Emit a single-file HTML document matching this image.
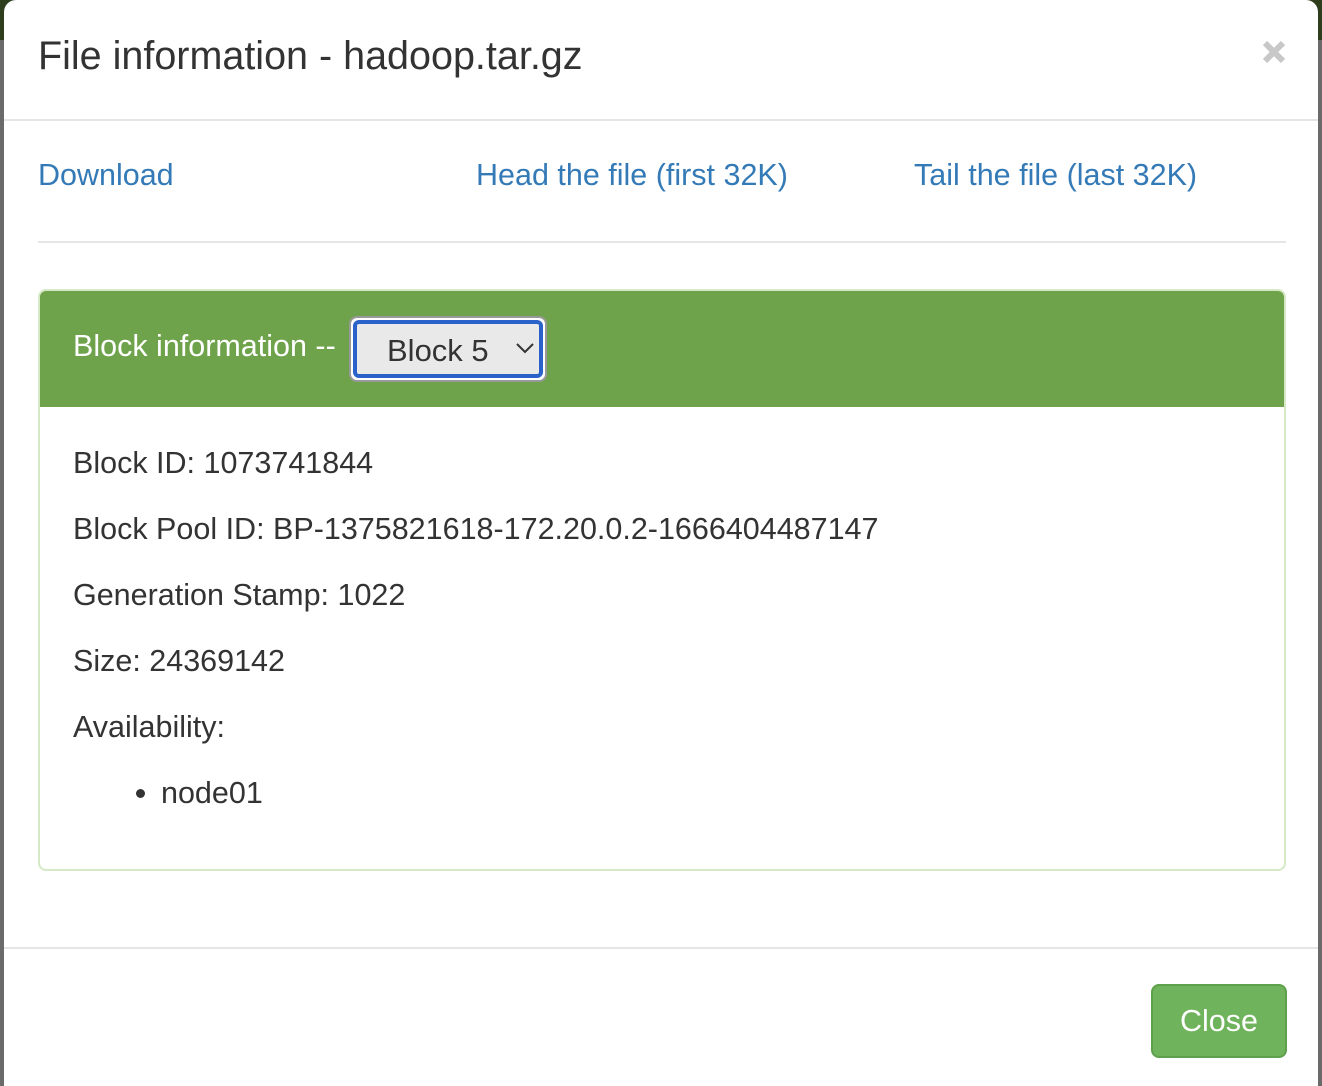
<!DOCTYPE html>
<html><head><style>
*{box-sizing:border-box;margin:0;padding:0}
body{width:1322px;height:1086px;overflow:hidden;background:#6a6a6a;font-family:"Liberation Sans",Arial,sans-serif;position:relative}
.topbar{position:absolute;left:0;top:0;width:1322px;height:40px;background:#2e3d1c}
.modal{position:absolute;left:4px;top:0;width:1314px;height:1086px;background:#fff;border-radius:12px 12px 0 0}
.title{position:absolute;left:34px;top:34px;font-size:39.5px;color:#333}
.x{position:absolute;left:1258px;top:40px}
.hr{position:absolute;left:0;width:1314px;height:2px;background:#e5e5e5}
.link{position:absolute;top:158px;font-size:30.5px;color:#337ab7}
.panel{position:absolute;left:34px;top:289px;width:1248px;height:582px;border:2px solid #d6e9c6;border-radius:8px;overflow:hidden}
.ph{height:116px;background:#6fa34b;position:relative}
.ph span{position:absolute;left:33px;top:38px;color:#fff;font-size:30.5px}
.sel{position:absolute;left:309px;top:25px;width:198px;height:66px;border:2px solid #999;border-radius:8px;background:#fff;padding:2px}
.sel div{width:100%;height:100%;border:4px solid #2a62c9;border-radius:6px;background:#e9e9e9;font-size:31px;color:#333;padding:9px 0 0 30px;position:relative}
.sel svg{position:absolute;right:4px;top:18px}
.pb{padding:39px 33px;font-size:30.5px;color:#333}
.pb p{height:66px}
.close{position:absolute;left:1147px;top:984px;width:136px;height:74px;background:#6fb35c;border:2px solid #5ea04c;border-radius:8px;color:#fff;font-size:30.5px;text-align:center;line-height:70px}
</style></head><body>
<div class="topbar"></div>
<div class="modal">
<div class="title">File information - hadoop.tar.gz</div>
<svg class="x" width="24" height="24" viewBox="0 0 24 24"><path d="M3 3L21 21M21 3L3 21" stroke="#c8c8c8" stroke-width="6"/></svg>
<div class="hr" style="top:119px"></div>
<div class="link" style="left:34px">Download</div>
<div class="link" style="left:472px">Head the file (first 32K)</div>
<div class="link" style="left:910px">Tail the file (last 32K)</div>
<div class="hr" style="top:241px;left:34px;width:1248px"></div>
<div class="panel">
<div class="ph"><span>Block information --</span>
<div class="sel"><div>Block 5<svg width="20" height="12" viewBox="0 0 20 12"><path d="M2 2l8 8 8-8" stroke="#333" stroke-width="2" fill="none"/></svg></div></div></div>
<div class="pb">
<p>Block ID: 1073741844</p>
<p>Block Pool ID: BP-1375821618-172.20.0.2-1666404487147</p>
<p>Generation Stamp: 1022</p>
<p>Size: 24369142</p>
<p>Availability:</p>
<ul style="padding-left:88px;margin-top:0"><li>node01</li></ul>
</div></div>
<div class="hr" style="top:947px"></div>
<div class="close">Close</div>
</div>
</body></html>
